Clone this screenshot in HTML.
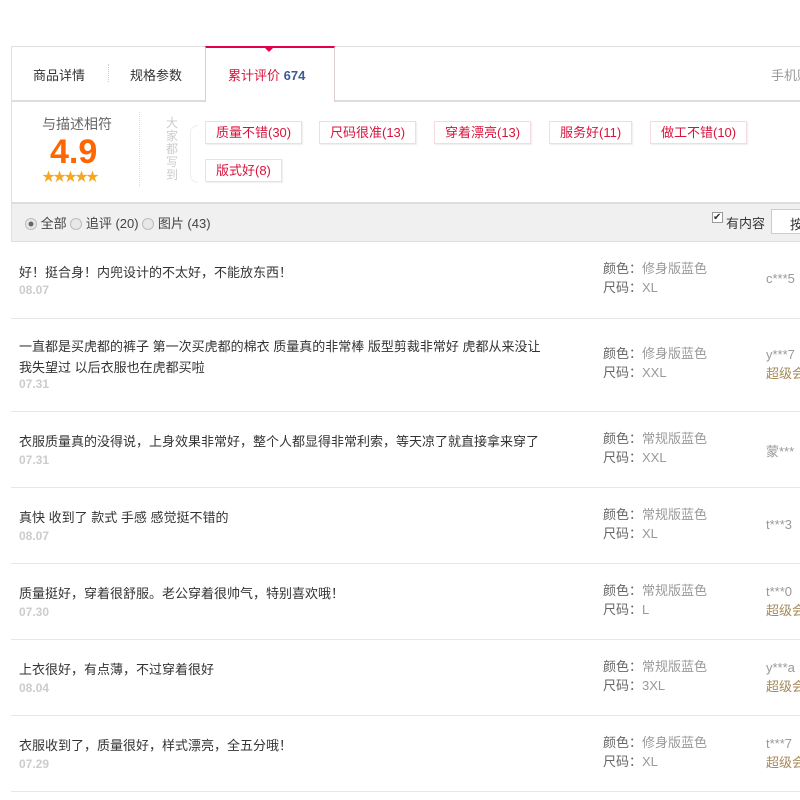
<!DOCTYPE html>
<html><head><meta charset="utf-8"><style>
*{margin:0;padding:0;box-sizing:border-box}
body{width:800px;height:800px;overflow:hidden;background:#fff;font-family:"Liberation Sans","Noto Sans CJK SC",sans-serif;font-size:13px;color:#333;position:relative}
.abs{position:absolute;white-space:nowrap}
.tabs{position:absolute;left:11px;top:46px;width:800px;height:56px;border:1px solid #dfdfdf;border-bottom:2px solid #ddd;border-right:none}
.act{position:absolute;left:205px;top:46px;width:130px;height:56px;border-top:2px solid #e5004f;border-left:1px solid #dfcfcf;border-right:1px solid #dfcfcf;background:#fff}
.tri{position:absolute;left:264px;top:47px;border:5px solid transparent;border-top:5px solid #e5004f}
.sum{position:absolute;left:11px;top:101px;width:800px;height:101px;border-left:1px solid #dfdfdf}
.tag{position:absolute;height:23px;border:1px solid #f3dbe0;box-shadow:1px 1px 1px #eee;color:#d9143c;font-size:13px;line-height:21px;padding:0 10px;white-space:nowrap}
.bar{position:absolute;left:11px;top:202px;width:800px;height:40px;background:#f0f0f0;border:1px solid #dfdfdf;border-top:2px solid #ddd;border-right:none}
.rad{display:inline-block;width:12px;height:12px;border-radius:50%;border:1px solid #bbb;background:#e8e8e8;vertical-align:-2px}
.row{position:absolute;left:11px;width:800px;border-bottom:1px solid #e6e6e6}
.t{color:#333;font-size:13px}
.d{color:#ccc;font-size:12px;font-weight:bold}
.k{color:#666}
.v{color:#999}
.g{color:#a68a5a}
.sku{line-height:19px;font-size:13px}
</style></head><body>
<div class="tabs"></div>
<div class="act"></div>
<div class="tri"></div>
<div class="abs" style="left:33px;top:65px;font-size:13px">商品详情</div>
<div class="abs" style="left:108px;top:64px;height:18px;border-left:1px dotted #ccc"></div>
<div class="abs" style="left:130px;top:65px;font-size:13px">规格参数</div>
<div class="abs" style="left:228px;top:65px;font-size:13px;color:#d9143c">累计评价 <b style="color:#3c5a96">674</b></div>
<div class="abs" style="left:771px;top:65px;font-size:13px;color:#999">手机购买</div>
<div class="sum"></div>
<div class="abs" style="left:42px;top:114px;font-size:14px;color:#666">与描述相符</div>
<div class="abs" style="left:50px;top:132px;font-size:34px;font-weight:bold;color:#ff6600;line-height:40px">4.9</div>
<div class="abs" style="left:42px;top:166px;font-size:13px;color:#f5a623;letter-spacing:-2px">★★★★★</div>
<div class="abs" style="left:139px;top:112px;height:75px;border-left:1px dotted #ddd"></div>
<div class="abs" style="left:166px;top:117px;width:13px;font-size:12px;line-height:13px;color:#ccc;white-space:normal">大家都写到</div>
<div class="abs" style="left:190px;top:125px;width:8px;height:58px;border:1px solid #eee;border-right:none;border-radius:8px 0 0 8px"></div>
<div class="tag" style="left:205px;top:121px">质量不错(30)</div>
<div class="tag" style="left:319px;top:121px">尺码很准(13)</div>
<div class="tag" style="left:434px;top:121px">穿着漂亮(13)</div>
<div class="tag" style="left:549px;top:121px">服务好(11)</div>
<div class="tag" style="left:650px;top:121px">做工不错(10)</div>
<div class="tag" style="left:205px;top:159px">版式好(8)</div>
<div class="bar"></div>
<div class="abs" style="left:25px;top:213px;font-size:13px;color:#444"><span class="rad" style="background:radial-gradient(#666 30%,#e8e8e8 40%)"></span> 全部 <span class="rad"></span> 追评 (20) <span class="rad"></span> 图片 (43)</div>
<div class="abs" style="left:712px;top:212px;width:11px;height:11px;border:1px solid #999;background:#fff;font-size:10px;line-height:9px">✔</div>
<div class="abs" style="left:726px;top:213px;font-size:13px">有内容</div>
<div class="abs" style="left:771px;top:209px;width:40px;height:25px;border:1px solid #ccc;background:#fff;padding:4px 0 0 18px;font-size:13px">按</div>

<div class="row" style="top:241px;height:78px"></div>
<div class="abs t" style="left:19px;top:262px">好！挺合身！内兜设计的不太好，不能放东西！</div>
<div class="abs d" style="left:19px;top:283px">08.07</div>
<div class="abs sku" style="left:603px;top:259px"><span class="k">颜色：</span><span class="v">修身版蓝色</span><br><span class="k">尺码：</span><span class="v">XL</span></div>
<div class="abs v" style="left:766px;top:271px">c***5</div>

<div class="row" style="top:319px;height:93px"></div>
<div class="abs t" style="left:19px;top:336px;line-height:21px">一直都是买虎都的裤子 第一次买虎都的棉衣 质量真的非常棒 版型剪裁非常好 虎都从来没让<br>我失望过 以后衣服也在虎都买啦</div>
<div class="abs d" style="left:19px;top:377px">07.31</div>
<div class="abs sku" style="left:603px;top:344px"><span class="k">颜色：</span><span class="v">修身版蓝色</span><br><span class="k">尺码：</span><span class="v">XXL</span></div>
<div class="abs sku" style="left:766px;top:345px"><span class="v">y***7</span><br><span class="g">超级会员</span></div>

<div class="row" style="top:412px;height:76px"></div>
<div class="abs t" style="left:19px;top:431px">衣服质量真的没得说，上身效果非常好，整个人都显得非常利索，等天凉了就直接拿来穿了</div>
<div class="abs d" style="left:19px;top:453px">07.31</div>
<div class="abs sku" style="left:603px;top:429px"><span class="k">颜色：</span><span class="v">常规版蓝色</span><br><span class="k">尺码：</span><span class="v">XXL</span></div>
<div class="abs v" style="left:766px;top:441px">蒙***</div>

<div class="row" style="top:488px;height:76px"></div>
<div class="abs t" style="left:19px;top:507px">真快 收到了 款式 手感 感觉挺不错的</div>
<div class="abs d" style="left:19px;top:529px">08.07</div>
<div class="abs sku" style="left:603px;top:505px"><span class="k">颜色：</span><span class="v">常规版蓝色</span><br><span class="k">尺码：</span><span class="v">XL</span></div>
<div class="abs v" style="left:766px;top:517px">t***3</div>

<div class="row" style="top:564px;height:76px"></div>
<div class="abs t" style="left:19px;top:583px">质量挺好，穿着很舒服。老公穿着很帅气，特别喜欢哦！</div>
<div class="abs d" style="left:19px;top:605px">07.30</div>
<div class="abs sku" style="left:603px;top:581px"><span class="k">颜色：</span><span class="v">常规版蓝色</span><br><span class="k">尺码：</span><span class="v">L</span></div>
<div class="abs sku" style="left:766px;top:582px"><span class="v">t***0</span><br><span class="g">超级会员</span></div>

<div class="row" style="top:640px;height:76px"></div>
<div class="abs t" style="left:19px;top:659px">上衣很好，有点薄，不过穿着很好</div>
<div class="abs d" style="left:19px;top:681px">08.04</div>
<div class="abs sku" style="left:603px;top:657px"><span class="k">颜色：</span><span class="v">常规版蓝色</span><br><span class="k">尺码：</span><span class="v">3XL</span></div>
<div class="abs sku" style="left:766px;top:658px"><span class="v">y***a</span><br><span class="g">超级会员</span></div>

<div class="row" style="top:716px;height:76px"></div>
<div class="abs t" style="left:19px;top:735px">衣服收到了，质量很好，样式漂亮，全五分哦！</div>
<div class="abs d" style="left:19px;top:757px">07.29</div>
<div class="abs sku" style="left:603px;top:733px"><span class="k">颜色：</span><span class="v">修身版蓝色</span><br><span class="k">尺码：</span><span class="v">XL</span></div>
<div class="abs sku" style="left:766px;top:734px"><span class="v">t***7</span><br><span class="g">超级会员</span></div>
</body></html>
